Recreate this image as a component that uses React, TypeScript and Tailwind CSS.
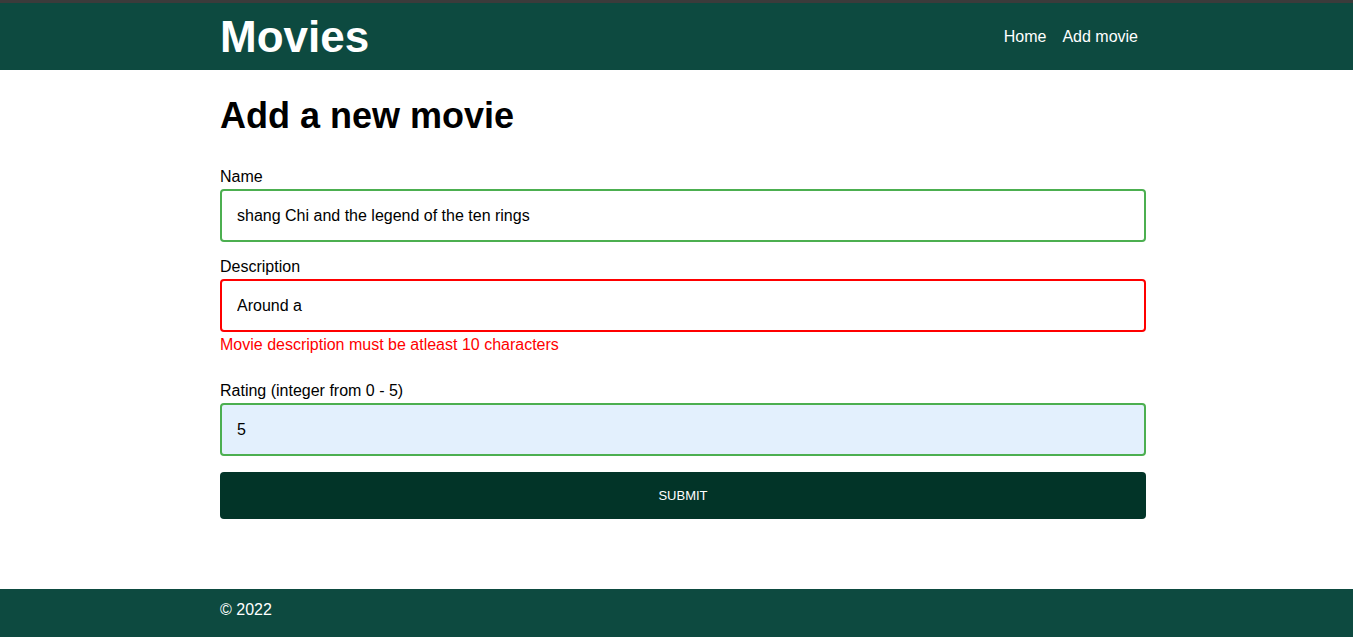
import React, { useState } from "react";

const font = { fontFamily: '"Liberation Sans", Arial, sans-serif' };

function Field({
  label,
  value,
  onChange,
  state,
  error,
  filled,
}: {
  label: string;
  value: string;
  onChange: (v: string) => void;
  state: "ok" | "error";
  error?: string;
  filled?: boolean;
}) {
  return (
    <div className="flex flex-col">
      <label className="pt-[1px] text-[16px] leading-[18px] text-black">{label}</label>
      <input
        value={value}
        onChange={(e) => onChange(e.target.value)}
        className={`mt-[3px] h-[53px] w-full rounded-[4px] border-2 px-[15px] text-[16px] text-black outline-none ${
          state === "ok" ? "border-[#4caf50]" : "border-[#ff0000]"
        } ${filled ? "bg-[#e3f0fd]" : "bg-white"}`}
        style={font}
      />
      {error && (
        <p className="mt-[4px] text-[16px] leading-[18px] text-[#ff0000]">{error}</p>
      )}
    </div>
  );
}

export default function App() {
  const [name, setName] = useState("shang Chi and the legend of the ten rings");
  const [desc, setDesc] = useState("Around a");
  const [rating, setRating] = useState("5");

  return (
    <div className="flex min-h-[637px] flex-col bg-white" style={font}>
      <div className="h-[3px] bg-[#3b3b3b]" />
      <header className="h-[67px] bg-[#0d4a40]">
        <div className="ml-[220px] flex h-full w-[926px] items-center justify-between">
          <h1 className="text-[44px] font-bold leading-none text-white">Movies</h1>
          <nav className="mr-[8px] flex gap-[16px] text-[16px] text-white">
            <a href="#">Home</a>
            <a href="#">Add movie</a>
          </nav>
        </div>
      </header>

      <main className="ml-[220px] w-[926px] flex-1 pb-[70px]">
        <h2 className="mt-[25px] text-[36px] font-bold leading-[41px] text-black">
          Add a new movie
        </h2>
        <form className="mt-[31px] flex flex-col" onSubmit={(e) => e.preventDefault()}>
          <Field label="Name" value={name} onChange={setName} state="ok" />
          <div className="mt-[15px]">
            <Field
              label="Description"
              value={desc}
              onChange={setDesc}
              state="error"
              error="Movie description must be atleast 10 characters"
            />
          </div>
          <div className="mt-[27px]">
            <Field
              label="Rating (integer from 0 - 5)"
              value={rating}
              onChange={setRating}
              state="ok"
              filled
            />
          </div>
          <button
            type="submit"
            className="mt-[16px] h-[47px] w-full rounded-[4px] bg-[#023428] text-[13px] text-white"
          >
            SUBMIT
          </button>
        </form>
      </main>

      <footer className="h-[48px] bg-[#0d4a40]">
        <div className="ml-[220px] pt-[12px] text-[16px] leading-[18px] text-white">© 2022</div>
      </footer>
    </div>
  );
}
